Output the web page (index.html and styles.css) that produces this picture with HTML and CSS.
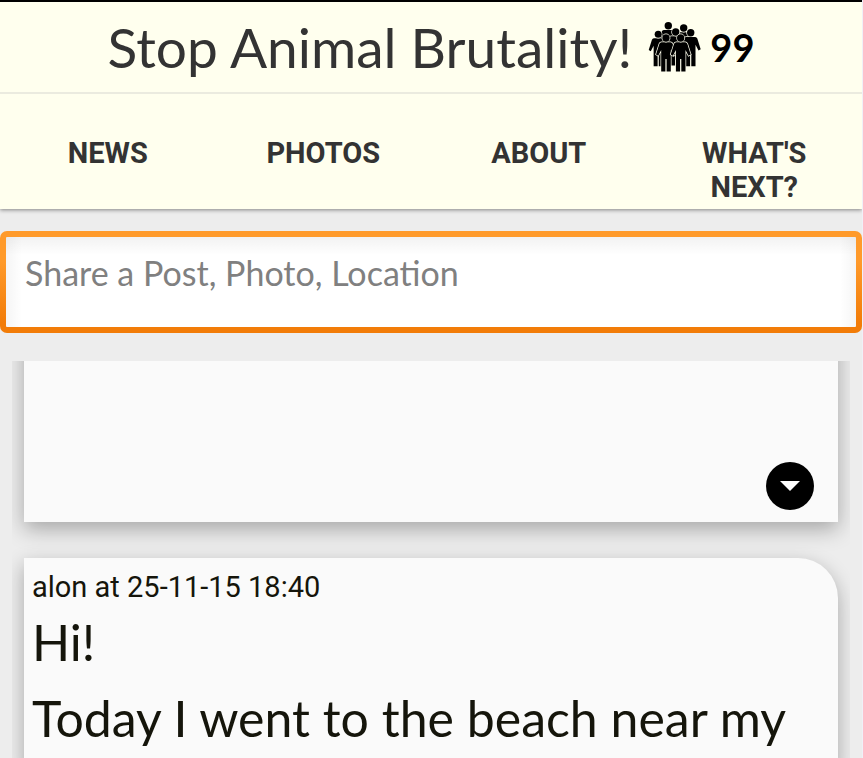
FILE: index.html
```html
<!DOCTYPE html>
<html lang="en">
<head>
  <meta charset="utf-8">
  <meta name="viewport" content="width=device-width, initial-scale=1">
  <title>Stop Animal Brutality!</title>
  <link rel="stylesheet" href="styles.css">
</head>
<body>
  <header class="top">
    <div class="brand">
      <h1 class="title">Stop Animal Brutality!</h1>
      <div class="members">
        <svg class="crowd" viewBox="0 0 54 52" aria-hidden="true">
          <defs>
            <g id="person">
              <path d="M-4.500 4.200H4.500Q6 4.200 6.600 5.800L10 16.500L7.800 17.800L4.800 12V33.500H.6V21H-.6V33.500H-4.800V12L-7.800 17.800L-10 16.500L-6.600 5.800Q-6 4.200-4.500 4.200Z"/>
              <circle r="3.700"/>
            </g>
          </defs>
          <use href="#person" transform="translate(20.300 4.700)"/>
          <use href="#person" transform="translate(35.700 7)"/>
          <use href="#person" transform="translate(27.700 11)"/>
          <use href="#person" transform="translate(10.200 13.300) scale(.95)"/>
          <use href="#person" transform="translate(42.700 11.700)"/>
          <use href="#person" transform="translate(18 17)"/>
          <use href="#person" transform="translate(32.700 17)"/>
        </svg>
        <span class="count">99</span>
      </div>
    </div>
    <nav class="tabs">
      <a href="#news">NEWS</a>
      <a href="#photos">PHOTOS</a>
      <a href="#about">ABOUT</a>
      <a href="#next">WHAT'S NEXT?</a>
    </nav>
  </header>
  <form class="share">
    <textarea class="share-box" aria-label="Share a post" placeholder="Share a Post, Photo, Location"></textarea>
  </form>
  <main class="feed">
    <article class="post post-previous">
      <button class="more" type="button" aria-label="More">
        <svg viewBox="0 0 48 48" aria-hidden="true"><path d="M14 19H34L24 29Z"/></svg>
      </button>
    </article>
    <article class="post post-current">
      <p class="byline">alon at 25-11-15 18:40</p>
      <p class="line">Hi!</p>
      <p class="line">Today I went to the beach near my</p>
    </article>
  </main>
</body>
</html>
```
FILE: styles.css
```css
* {
  box-sizing: border-box;
}

body {
  --hand: Lato, "Liberation Sans", sans-serif;
  display: flex;
  flex-direction: column;
  height: 100vh;
  margin: 0;
  overflow: hidden;
  border-right: 1px solid #f0f0f8;
  background: #ededed;
  color: #15150b;
  font-family: Roboto, sans-serif;
  font-size: 29px;
}

.top {
  border-top: 2px solid #000;
  background: #ffffee;
  box-shadow: 0 1px 4px rgba(0, 0, 0, 0.45);
}

.brand {
  display: flex;
  align-items: center;
  justify-content: center;
  gap: 16px;
  height: 92px;
  border-bottom: 2px solid #ebebdf;
}

.title {
  margin: 0;
  color: #333;
  font: 400 55px/64px var(--hand);
}

.members {
  display: flex;
  align-items: center;
  gap: 8px;
  color: #000;
}

.crowd {
  width: 54px;
  height: 52px;
  stroke: #ffffee;
  stroke-width: 1.4px;
  paint-order: stroke;
}

.count {
  font: 700 38px/48px var(--hand);
}

.tabs {
  display: grid;
  grid-template-columns: repeat(4, 1fr);
  padding: 42px 0 5px;
}

.tabs a {
  padding: 0 40px;
  color: #333;
  font-weight: 700;
  line-height: 34px;
  text-align: center;
  text-decoration: none;
}

.share {
  display: flex;
  margin-top: 22px;
}

.share-box {
  width: 100%;
  height: 102px;
  padding: 16px 19px;
  border: 6px solid transparent;
  border-radius: 7px;
  outline: 0;
  resize: none;
  background:
    linear-gradient(rgba(0, 0, 0, 0.05), transparent 18px) padding-box,
    linear-gradient(90deg, rgba(0, 0, 0, 0.04), transparent 16px) padding-box,
    linear-gradient(270deg, rgba(0, 0, 0, 0.04), transparent 16px) padding-box,
    linear-gradient(#fff, #fff) padding-box,
    linear-gradient(#ff9a2a 30%, #f27c08 90%) border-box;
  font: 400 34px/40px var(--hand);
}

.share-box::placeholder {
  color: #808080;
  opacity: 1;
}

.feed {
  flex: 1;
  min-height: 0;
  margin: 28px 12px 0;
  padding: 0 12px;
  overflow: hidden;
}

.post {
  background: #fafafa;
  box-shadow: 0 7px 20px rgba(0, 0, 0, 0.3);
}

.post-previous {
  display: flex;
  align-items: flex-end;
  justify-content: flex-end;
  height: 201px;
  margin: -40px 0 36px;
  padding: 12px 24px;
}

.more {
  width: 48px;
  height: 48px;
  padding: 0;
  border: 0;
  border-radius: 50%;
  background: #000;
}

.more svg {
  display: block;
  fill: #fff;
}

.post-current {
  padding: 12px 8px;
  border-radius: 0 40px 0 0;
}

.byline {
  margin: 0;
  line-height: 34px;
}

.line {
  margin: 0;
  font: 400 50px/76px var(--hand);
}
```
